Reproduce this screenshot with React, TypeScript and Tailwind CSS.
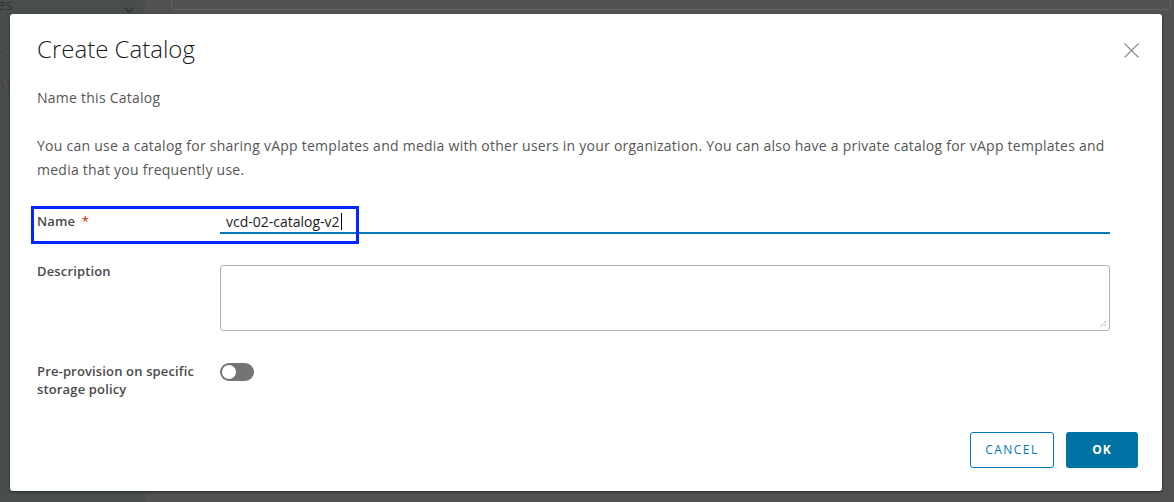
import { ChevronDown } from "lucide-react";

const font = { fontFamily: "'Open Sans', 'Liberation Sans', sans-serif" };

const Toggle = () => (
  <div className="relative h-[18px] w-[34px] rounded-full bg-[#747474]">
    <span className="absolute left-[2px] top-[2px] h-[14px] w-[14px] rounded-full bg-white" />
  </div>
);

const CreateCatalogModal = () => {
  return (
    <div
      className="absolute left-[10px] top-[14px] h-[477px] w-[1152px] rounded-[3px] bg-white shadow-[0_1px_3px_rgba(0,0,0,0.5)]"
      style={font}
    >
      <div className="flex items-start justify-between pl-[27px] pr-[23px] pt-[19px]">
        <h2 className="text-[24px] font-light leading-[32px] text-[#1b1b1b]">
          Create Catalog
        </h2>
        <button className="mt-[10px]">
          <svg width="15" height="15" viewBox="0 0 15 15">
            <path d="M0.5 0.5 L14.5 14.5 M14.5 0.5 L0.5 14.5" stroke="#8a8a8a" strokeWidth="1.1" />
          </svg>
        </button>
      </div>

      <div className="pl-[27px] pr-[24px]">
        <p className="mt-[21px] text-[14px] leading-[24px] tracking-[0.25px] text-[#565656]">
          Name this Catalog
        </p>
        <p className="mt-[24px] text-[14px] leading-[24px] tracking-[0.25px] text-[#565656]">
          You can use a catalog for sharing vApp templates and media with other users in your organization. You can also have a private catalog for vApp templates and
          <br />
          media that you frequently use.
        </p>

        <div className="relative mt-[28px] flex h-[24px] items-center">
          <div className="pointer-events-none absolute left-[-6px] top-[-4px] h-[38px] w-[328px] border-[3px] border-[#0026ff]" />
          <label className="w-[183px] text-[13px] font-semibold tracking-[0.15px] text-[#4a4a4a]">
            Name <span className="ml-[3px] font-normal text-[#c92100]">*</span>
          </label>
          <div className="flex h-[24px] w-[890px] items-center border-b-2 border-[#0079b8] pl-[6px] text-[14px] text-[#1b1b1b]">
            vcd-02-catalog-v2
            <span className="ml-[1px] inline-block h-[17px] w-px bg-black" />
          </div>
        </div>

        <div className="mt-[31px] flex">
          <label className="-mt-[3px] w-[183px] text-[13px] font-semibold leading-[18px] tracking-[0.15px] text-[#4a4a4a]">
            Description
          </label>
          <div className="relative h-[66px] w-[890px] rounded-[3px] border border-[#b3b3b3]">
            <svg
              className="absolute bottom-[2px] right-[2px]"
              width="8"
              height="8"
              viewBox="0 0 8 8"
            >
              <path d="M7 1 L1 7 M7 4 L4 7" stroke="#666" strokeWidth="0.8" strokeDasharray="1 1" />
            </svg>
          </div>
        </div>

        <div className="mt-[31px] flex">
          <label className="w-[183px] text-[13px] font-semibold leading-[18px] tracking-[0.15px] text-[#4a4a4a]">
            Pre-provision on specific
            <br />
            storage policy
          </label>
          <div className="pt-[1px]">
            <Toggle />
          </div>
        </div>
      </div>

      <div className="absolute bottom-[23px] right-[24px] flex gap-[12px]">
        <button className="h-[36px] w-[84px] rounded-[3px] border border-[#0079b8] text-[12px] tracking-[0.12em] text-[#0079b8]">
          CANCEL
        </button>
        <button className="h-[36px] w-[72px] rounded-[3px] bg-[#0072a3] text-[12px] font-bold tracking-[0.08em] text-white">
          OK
        </button>
      </div>
    </div>
  );
};

export default function App() {
  return (
    <div className="relative flex h-[502px] w-[1174px] overflow-hidden bg-[#515151]">
      <div className="relative h-full w-[145px] bg-[#4a4e4a]" style={font}>
        <span className="absolute left-[-6px] top-[-6px] text-[14px] text-[#2f332f]">ies</span>
        <ChevronDown size={16} className="absolute left-[121px] top-[2px] text-[#2f332f]" />
        <span className="absolute left-[-4px] top-[36px] text-[14px] text-[#3c403c]">L</span>
        <span className="absolute left-[-4px] top-[74px] text-[14px] text-[#3c403c]">n E</span>
      </div>
      <div className="relative h-full flex-1">
        <div className="absolute left-[26px] top-[-10px] h-[20px] w-[1000px] rounded-[3px] border border-[#606060] bg-[#525252]" />
      </div>
      <CreateCatalogModal />
    </div>
  );
}
